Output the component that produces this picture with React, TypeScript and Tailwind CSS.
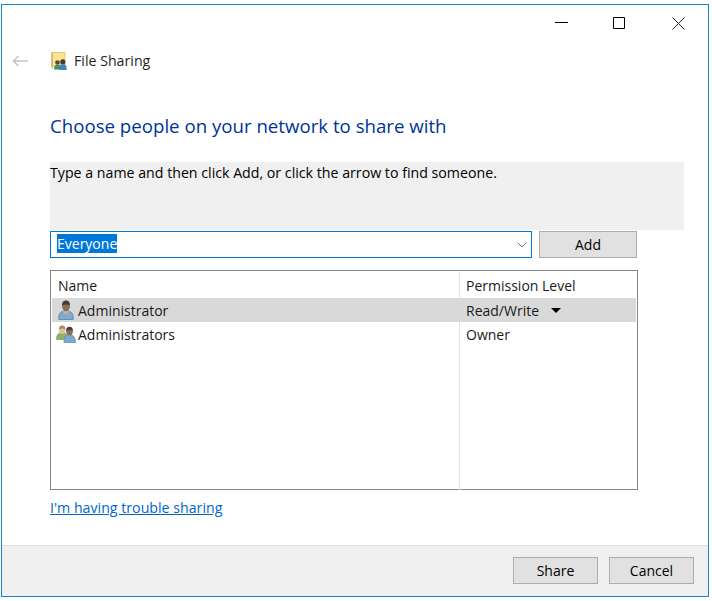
import { ChevronDown } from 'lucide-react';

function PersonIcon({ className }: { className?: string }) {
  return (
    <svg viewBox="0 0 16 20" className={className}>
      <path d="M.8 19.500c-.5-5 1.200-7.500 4-8.300l3.200 1.300 3.200-1.300c2.800.8 4.500 3.300 4 8.300z" fill="#7da9d2" stroke="#56799c" strokeWidth=".7" />
      <path d="M5.500 9.500h5l.5 2.200-3 3-3-3z" fill="#c8b3a2" />
      <ellipse cx="8" cy="6" rx="4" ry="5.200" fill="#8a6d5b" />
      <path d="M4 5.200C4.300 1.500 6 .5 8 .5s3.700 1 4 4.700C10 4.200 6.500 4.200 4 5.200z" fill="#4a3d36" />
    </svg>
  );
}

function GroupIcon({ className }: { className?: string }) {
  return (
    <svg viewBox="0 0 20 18" className={className}>
      <path d="M.5 14.500c0-4.500 1.800-6 3.500-6.500l2.200.9L8.400 8c1.700.5 3 2 3 6.500z" fill="#8db36b" stroke="#6f9455" strokeWidth=".6" />
      <ellipse cx="6.200" cy="4.800" rx="3.300" ry="4.200" fill="#dcc09c" />
      <path d="M2.900 4.200C3.200 1.500 4.700.6 6.200.6s3 .9 3.300 3.600c-2.200-.8-4.400-.8-6.600 0z" fill="#a58a5f" />
      <path d="M8 17.500c-.3-5 1.400-7 3.400-7.500l2 .8 2-.8c2 .5 4.100 2.500 4 7.500z" fill="#7da9d2" stroke="#56799c" strokeWidth=".6" />
      <ellipse cx="13.500" cy="6.300" rx="3.400" ry="4.300" fill="#8a6d5b" />
      <path d="M10.100 5.600c.3-3 1.800-3.900 3.400-3.900s3.100.9 3.400 3.900c-2.200-.8-4.600-.8-6.800 0z" fill="#4a3d36" />
    </svg>
  );
}

function ShareIcon({ className }: { className?: string }) {
  return (
    <svg viewBox="0 0 16 18" className={className}>
      <path d="M.5.500h13.500v14H.5z" fill="#fbe48f" stroke="#e0c97c" />
      <path d="M.5.500h1.500v16H.5z" fill="#d8b878" />
      <path d="M3 17.500c0-3.500 1-4.500 2.500-4.800l1.300.5 1.300-.5c1.400.3 1.900 1.300 1.900 4.800z" fill="#3f9560" />
      <circle cx="6.500" cy="10.500" r="2.300" fill="#5a4538" />
      <path d="M8 18c0-4 1.200-5.500 2.800-5.800l1.200.5 1.200-.5c1.600.3 2.500 1.800 2.500 5.800z" fill="#3b86c4" />
      <circle cx="11.800" cy="9.800" r="2.600" fill="#4a382e" />
    </svg>
  );
}

function WinButton({ label, className }: { label: string; className?: string }) {
  return (
    <button className={`border border-[#adadad] bg-[#e1e1e1] text-[#000] ${className ?? ''}`}>{label}</button>
  );
}

export default function App() {
  return (
    <div className="w-[712px] h-[601px] bg-white pt-[4px] pl-[1px] font-['Open_Sans','Noto_Sans',sans-serif] text-[14px] text-[#1a1a1a] overflow-hidden">
      <div className="w-[708px] h-[593px] border border-[#1384d6] flex flex-col">
        {/* title bar */}
        <div className="h-[34px] flex items-start justify-end shrink-0">
          <svg width="13" height="13" viewBox="0 0 13 13" className="mt-[12px] mr-[45px]" fill="none" stroke="#000">
            <path d="M0 5.500h13" />
          </svg>
          <svg width="13" height="13" viewBox="0 0 13 13" className="mt-[12px] mr-[46px]" fill="none" stroke="#000" strokeWidth="1">
            <path d="M.5.500h11v11H.5z" />
          </svg>
          <svg width="13" height="13" viewBox="0 0 13 13" className="mt-[12px] mr-[23px]" fill="none" stroke="#222" strokeWidth="1">
            <path d="M.5.500l12 12M12.500.500l-12 12" />
          </svg>
        </div>

        {/* back + caption */}
        <div className="h-[44px] flex items-center shrink-0">
          <svg width="16" height="12" viewBox="0 0 16 12" className="ml-[10px]" fill="none" stroke="#c4c4c4" strokeWidth="1.500">
            <path d="M16 6H1.500M6.500 1l-5 5 5 5" />
          </svg>
          <ShareIcon className="w-[16px] h-[18px] ml-[23px]" />
          <span className="ml-[7px] text-[14.2px] text-[#1f1f1f]">File Sharing</span>
        </div>

        <div className="flex-1 flex flex-col pl-[48px] pr-[24px]">
          <h1 className="mt-[30px] h-[25px] leading-[25px] text-[18.67px] text-[#003399]">Choose people on your network to share with</h1>

          <div className="mt-[24px] h-[68px] bg-[#f0f0f0] text-[14.2px] text-[#000] leading-[22px] shrink-0">
            Type a name and then click Add, or click the arrow to find someone.
          </div>

          {/* name entry */}
          <div className="mt-[1px] flex w-[587px] justify-between items-start">
            <div className="w-[482px] h-[27px] border border-[#0078d7] flex items-center pl-[6px] pr-[1px]">
              <span className="bg-[#0078d7] text-white leading-[19px] -mt-[2px]">Everyone</span>
              <ChevronDown className="ml-auto w-[16px] h-[16px] text-[#505050]" strokeWidth={1.2} />
            </div>
            <WinButton label="Add" className="w-[98px] h-[27px]" />
          </div>

          {/* people list */}
          <div className="mt-[12px] w-[588px] h-[220px] border border-[#828790] p-[1px] shrink-0">
            <div className="grid grid-cols-[407px_1fr] h-full">
              <div className="h-[26px] flex items-center pl-[6px]">Name</div>
              <div className="h-[26px] flex items-center pl-[6px] border-l border-[#e5e5e5]">Permission Level</div>

              <div className="h-[24px] bg-[#d9d9d9] flex items-center pl-[6px]">
                <PersonIcon className="w-[16px] h-[20px] mr-[4px]" />
                Administrator
              </div>
              <div className="h-[24px] bg-[#d9d9d9] flex items-center pl-[6px] border-l border-[#d9d9d9]">
                Read/Write
                <span className="ml-[12px] w-0 h-0 border-x-[5px] border-x-transparent border-t-[5px] border-t-black" />
              </div>

              <div className="h-[24px] flex items-center pl-[4px]">
                <GroupIcon className="w-[20px] h-[18px] mr-[2px]" />
                Administrators
              </div>
              <div className="h-[24px] flex items-center pl-[6px] border-l border-[#e5e5e5]">Owner</div>

              <div className="h-[144px]" />
              <div className="h-[144px] border-l border-[#e5e5e5]" />
            </div>
          </div>

          <a className="mt-[8px] w-fit text-[14.2px] text-[#0066cc] underline leading-[20px]">I'm having trouble sharing</a>
        </div>

        {/* footer */}
        <div className="h-[51px] shrink-0 border-t border-[#dfdfdf] bg-[#f0f0f0] flex justify-end gap-[11px] pt-[11px] pr-[14px]">
          <WinButton label="Share" className="w-[85px] h-[27px]" />
          <WinButton label="Cancel" className="w-[85px] h-[27px]" />
        </div>
      </div>
    </div>
  );
}
